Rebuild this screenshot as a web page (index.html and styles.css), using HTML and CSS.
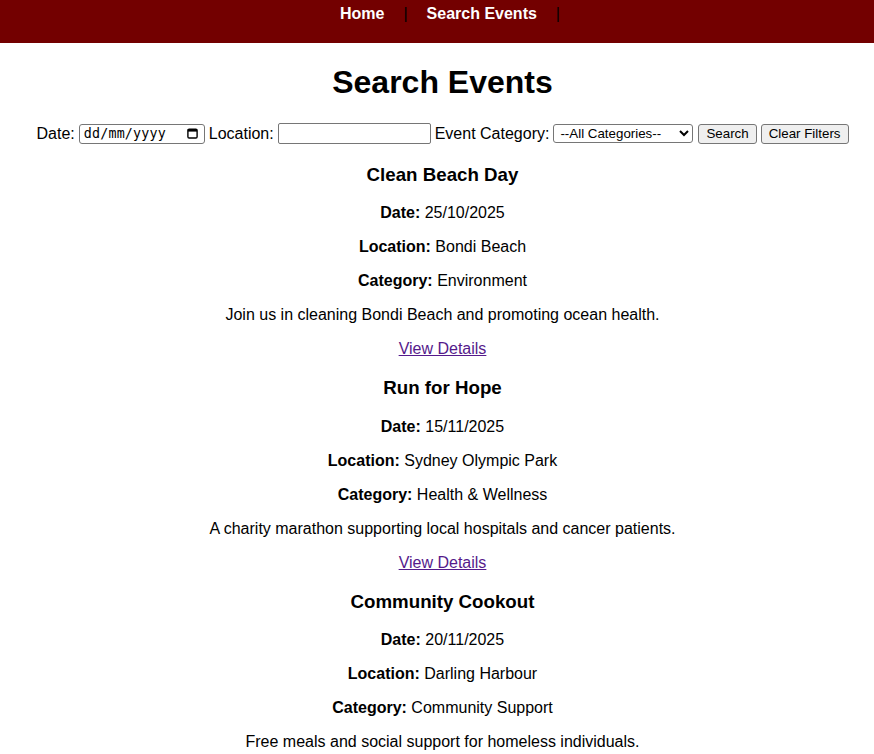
FILE: index.html
```html
<!DOCTYPE html>
<html lang="en">
<head>
<meta charset="utf-8">
<title>Search Events</title>
<link rel="stylesheet" href="styles.css">
</head>
<body>
<header class="site-header">
  <nav class="nav">
    <a href="#" class="nav-link">Home</a><span class="sep">|</span><a href="#" class="nav-link">Search Events</a><span class="sep">|</span>
  </nav>
</header>
<main class="content">
  <h1 class="page-title">Search Events</h1>
  <form class="filters">
    <label>Date:</label>
    <span class="date-box"><span class="date-text">dd/mm/yyyy</span><svg class="cal" width="11" height="11" viewBox="0 0 11 11"><rect x="0.9" y="1.2" width="9.2" height="8.8" rx="1.2" fill="none" stroke="#000" stroke-width="1.4"/><rect x="0.9" y="1.2" width="9.2" height="2.4" fill="#000"/></svg></span>
    <label>Location:</label>
    <input type="text" class="text-input">
    <label>Event Category:</label>
    <select class="select"><option>--All Categories--</option></select>
    <button type="button" class="btn">Search</button>
    <button type="button" class="btn">Clear Filters</button>
  </form>
  <section class="event">
    <h3>Clean Beach Day</h3>
    <p><strong>Date:</strong> 25/10/2025</p>
    <p><strong>Location:</strong> Bondi Beach</p>
    <p><strong>Category:</strong> Environment</p>
    <p>Join us in cleaning Bondi Beach and promoting ocean health.</p>
    <p><a href="#" class="details">View Details</a></p>
  </section>
  <section class="event">
    <h3>Run for Hope</h3>
    <p><strong>Date:</strong> 15/11/2025</p>
    <p><strong>Location:</strong> Sydney Olympic Park</p>
    <p><strong>Category:</strong> Health &amp; Wellness</p>
    <p>A charity marathon supporting local hospitals and cancer patients.</p>
    <p><a href="#" class="details">View Details</a></p>
  </section>
  <section class="event">
    <h3>Community Cookout</h3>
    <p><strong>Date:</strong> 20/11/2025</p>
    <p><strong>Location:</strong> Darling Harbour</p>
    <p><strong>Category:</strong> Community Support</p>
    <p>Free meals and social support for homeless individuals.</p>
    <p><a href="#" class="details">View Details</a></p>
  </section>
</main>
</body>
</html>
```
FILE: styles.css
```css
html, body {
  margin: 0;
  padding: 0;
}
body {
  font-family: "Liberation Sans", Arial, sans-serif;
  font-size: 16px;
  color: #000;
  background: #fff;
  text-align: center;
}
.site-header {
  background: #730000;
  height: 43px;
  box-sizing: border-box;
  padding-top: 5px;
  padding-left: 45px;
}
.nav {
  display: flex;
  justify-content: center;
  align-items: center;
  height: 18px;
  font-weight: bold;
}
.nav-link {
  color: #fff;
  text-decoration: none;
}
.sep {
  color: #000;
  font-weight: normal;
  margin: 0 19px;
  line-height: 1;
}
.content {
  padding-left: 11px;
}
.page-title {
  font-size: 32px;
  margin: 21px 0;
  line-height: 37px;
}
.filters {
  margin: 0;
  height: 21px;
  padding: 1px 0;
  display: flex;
  justify-content: center;
  align-items: center;
  gap: 4px;
  font-size: 16px;
  white-space: nowrap;
}
.date-box {
  display: inline-flex;
  align-items: center;
  justify-content: space-between;
  box-sizing: border-box;
  width: 126px;
  height: 20px;
  border: 1px solid #767676;
  border-radius: 3px;
  padding: 0 6px 0 4px;
  background: #fff;
}
.date-text {
  font-family: "DejaVu Sans Mono", "Liberation Mono", monospace;
  font-size: 13.33px;
  letter-spacing: 0.2px;
  line-height: 16px;
}
.cal {
  display: block;
}
.text-input {
  box-sizing: border-box;
  width: 153px;
  height: 21px;
  border: 1px solid #767676;
  border-radius: 2px;
  padding: 1px 2px;
  font: 13.33px "Liberation Sans", Arial, sans-serif;
  margin: 0;
}
.select {
  box-sizing: border-box;
  width: 140px;
  height: 19px;
  border: 1px solid #767676;
  border-radius: 3px;
  background: #fff;
  font: 13.33px "Liberation Sans", Arial, sans-serif;
  color: #000;
  margin: 0 1px 0 0;
  padding: 0 0 0 2px;
}
.btn {
  box-sizing: border-box;
  height: 20px;
  border: 1px solid #767676;
  border-radius: 3px;
  background: #efefef;
  font: 13.33px "Liberation Sans", Arial, sans-serif;
  color: #000;
  padding: 0 7px;
  margin: 0;
}
.event h3 {
  font-size: 18.72px;
  margin: 18.72px 0;
}
.event p {
  margin: 16px 0;
}
.details {
  color: #551a8b;
  text-decoration: underline;
}
```
